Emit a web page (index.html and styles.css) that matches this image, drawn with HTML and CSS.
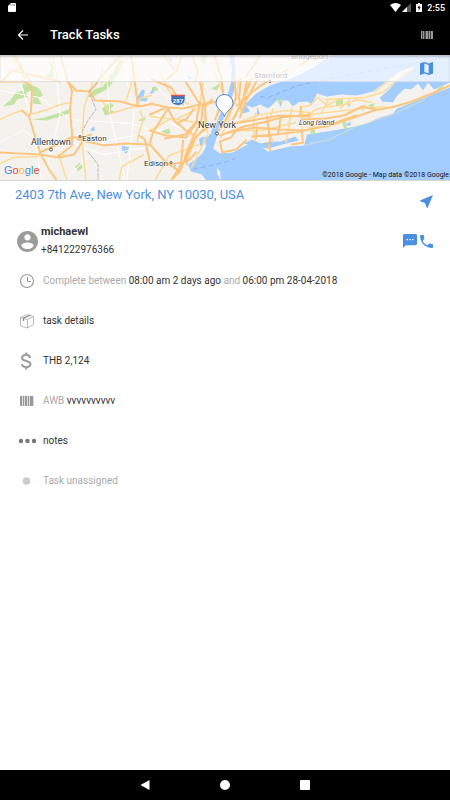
FILE: index.html
```
<!DOCTYPE html>
<html lang="en">

<head>
    <meta charset="UTF-8">
    <meta name="viewport" content="width=device-width, initial-scale=1.0">
    <title>Track Tasks</title>
    <link rel="stylesheet" href="styles.css">
</head>

<body>
<div class="status">
    <svg class="sd" width="8" height="9" viewBox="0 0 8 9"><path d="M3 0h4q1 0 1 1v7q0 1-1 1H1q-1 0-1-1V3z" fill="#fff"/><path d="M3 1v2M5 1v2M6.500 1v2" stroke="#777" stroke-width=".7"/></svg>
    <div class="status-right">
        <svg width="21" height="9" viewBox="0 0 21 9">
            <path d="M0 2Q5.500-2 11 2L5.500 9z" fill="#fff"/>
            <path d="M12 9l9-9v9z" fill="#555"/>
            <path d="M12 9l5-5v5z" fill="#fff"/>
        </svg>
        <svg width="6" height="9" viewBox="0 0 6 9"><path d="M0 1h2V0h2v1h2v8H0z" fill="#fff"/><path d="M3.500 2L1.500 5h1.200v2.500l2-3.300H3.500z" fill="#000"/></svg>
        <span>2:55</span>
    </div>
</div>
<header class="bar">
    <button type="button" class="icon-btn back" aria-label="Back">
        <svg width="12" height="12" viewBox="0 0 12 12"><path d="M11 6H1.500M6 1.500L1.500 6 6 10.500" fill="none" stroke="#fff" stroke-width="1.200"/></svg>
    </button>
    <h1>Track Tasks</h1>
    <button type="button" class="icon-btn" aria-label="Scan barcode">
        <svg width="12" height="8" viewBox="0 0 12 8"><path d="M0 0h12v8H0z" fill="#444"/><path d="M0 0h1v8H0zM2 0h1v8H2zM5 0h2v8H5zM8 0h1v8H8zM10 0h2v8h-2z" fill="#999"/></svg>
    </button>
</header>

<main>
    <section class="map">
        <svg class="map-canvas" viewBox="0 0 450 126" preserveAspectRatio="xMidYMid slice">
            <rect width="450" height="126" fill="#f5f2ee"/>
            <!-- parks -->
            <g fill="#c3e3a4">
                <path d="M3 52l8-7 5-7 8-2-2-6 9-1 3 6-8 3 2 4-11 3-3 5zM33 42l-2-12 8 4 4 7-5 3 4 6-9-1zM87 43l7-8 9-3 8-11 9-16 4 2-8 16-9 12-14 7zM31 65l14-2 24-8v4l-22 7zM102 54l8-6 4 3-4 4 6 3-11 3zM75 112l5-4 3 5-5 4zM138 66l8-4-2 5zM152 33l4-2 3 4-7 3zM161 77l8-3 2 4-7 4z"/>
                <path d="M46 23l5-8-2-10 5 8-1 11zM211 34l9-5-3 7zM199 6l4-6h5l-3 9z"/>
            </g>
            <!-- sound, ocean and bay -->
            <g fill="#a3ccff">
                <path d="M333 0L315 12 300 20 285 26 270 31 256 39 246 49 240 60 226 68 212 74 211 79 204 83 206 92 203 98 197 104 188 110 191 117 202 120 206 126H450V0z"/>
                <path d="M234 0h-5l3 14-1 14-4 14-5 13-5 12-7 14 1 7 7 2 3-8-2-7 5-12 7-16 5-19-1-17z"/>
                <path d="M137 43l5-8 3 1-2 8 5-1-2 4-8-1zM122 91l7 2-2 6-5-2zM91 74l3-2 1 4-4 1zM149 40l4-6 1 4zM168 2l5 4-3 2zM173 112l3-4-1 8zM187 20l6 4-4 1zM199 84l5-2-1 10-3-1z"/>
            </g>
            <!-- long island -->
            <path d="M217 82L219 72 236 63 241 52 243 59 250 57 246 51 253 53 260 50 268 54 277 46 288 46 293 52 298 48 307 47 312 50 317 39 327 42 342 40 357 41 373 37 385 28 400 17 415 12 408 19 396 27 387 37 380 43 382 47 393 48 397 41 405 34 411 35 418 29 423 36 428 28 434 35 443 31 450 28V33L437 38 423 44 397 54 393 59 377 64 367 69 350 73 327 77 307 80 304 91 290 92 268 97 262 93 248 90 240 94 233 98 220 99 213 94z" fill="#f5f2ee"/>
            <g fill="#a3ccff">
                <path d="M244 89l8-4 9 4 9-2 11 0 14-5 4 4-13 3-18 5-14-2zM257 52l3 7-3 2zM279 47l1 6 3-6zM345 71l5-4 1 4z"/>
            </g>
            <g fill="#c3e3a4">
                <path d="M278 46l3-2v4l-3 1zM336 45l7-1v7h-7zM346 49l4-2v6zM361 52l5-2-3 7zM368 51l7-3-2 6zM342 67h4l1 8-3-1zM310 76l5-1v5h-4zM437 34l7-4-1 4-5 3zM240 58l2-4 2 3z"/>
            </g>
            <path d="M217 113l3 4 1 9-4-7z" fill="#f5f2ee"/>
            <!-- minor streets -->
            <g fill="none" stroke="#fff" stroke-width="1">
                <path d="M0 36l40 7 30 22 60 4 40 12M0 87l24-11 22 17 20-7 36 14 52-8M105 0l5 60 15 66M45 120l15-60-5-60M140 17l30 28 25 20M155 60l24 13 30 8M125 17l9 40-7 69M20 26l10 35 12 65M64 126l40-39 60-12"/>
            </g>
            <!-- roads -->
            <g fill="none" stroke="#fcdb98" stroke-width="1.500" stroke-linejoin="round">
                <path d="M0 65q14-7 22-9M31 60q18-5 26-9l13-3M93 27l-9 26-2 35 4 38M101 44l9 15 25-7 6-9 11-2M134 8l-3 23-5 15M140 56l3 9-5 18-1 8M144 100l-22 12-3 14M0 109l13-6 26-1M58 99l9 27M101 29L128 4M12 0l13 25M53 0l5 28M150 62l26 3 24-12 26-10M160 17l9 20 20 13M150 76l21-12 31 5M203 27l-3 22 8 31-17 34M215 18l8 21-6 20M239 24l-3 21-15 38M249 24l-5 22-12 22"/>
                <path d="M240 67L262 60 285 56 310 58M240 76L262 76 296 68M256 58L253 72 255 87M273 54L268 72 273 88M292 53L286 88M300 53L310 51 318 43 327 51 340 44M305 62L318 54 345 50 357 45 372 48M329 44L322 58M350 45L340 54M309 60L345 56 385 52M325 45L365 43 383 38 402 21 413 14M307 74L325 69M374 38L396 20M302 57L302 78"/>
                <path d="M155 126l14-25 30-11"/>
            </g>
            <g fill="none" stroke="#fcc680" stroke-width="2" stroke-linejoin="round" stroke-linecap="round">
                <path d="M0 27h23q7 1 9 9l-1 21-2 5-7-6M29 62l6 20 6 18 8 15 8 11M0 98l40 2 19 3 15-3 8-12M40 98l17-8 14-7 12 0 8-3M68 27l4 9-2 19 2 24 0 12-14 11M68 27l8 9 14 1 5 9 26 1 17 5 12-2M90 37l14-18 17-19M78 85l26 6 21-2 25 1M131 0l7 52M139 81l6 4 5 23"/>
                <path d="M150 49l18 4 15 1 17-4 15-3M168 54l-15 24-3 10M168 54l6 12 12 10 7 4M150 76l16 5 20 2 10-14 4-22M200 28l5 23 1 20-16 20-10 26-9 9M186 106l10-24 13-10M180 117l-15-10-15-17M195 27l3-9-6-18M212 45l-7 7M214 0l7 22 3 23-9 20M234 22l2 21-9 20-8 13M252 24l-12 27-7 14M247 26l-5 24"/>
                <path d="M237 51L254 36 270 25 288 15M222 70L240 68 257 65 280 61 310 62M220 81L244 72 263 68 281 63 310 60M228 78L254 73 280 75 304 76 330 71 354 63 374 56 395 52M237 75L231 83 220 87 222 97M252 82L276 80 300 77 328 71 356 61M301 52L300 62M267 62L270 86M256 84L257 72M281 62L278 80M301 65L326 64 344 61 362 52 376 55M395 52L412 47 432 39 450 31M268 88L270 96M302 77L303 88 292 90M222 98L236 95 246 86"/>
                <path d="M183 50l-12-17-19-8M194 54l-7 10-10 5M169 110l18-3 9-9M203 51l-2 16-8 16-8 19 2 8M197 67l-12 13-20 4M171 126l10-16 2-24M150 60l14-6M186 28l14 22M241 24l-2 20 3 14M258 24l-12 22-6 17"/>
                <path d="M60 27L12 16 2 27M15 0l8 17 8 10M60 0l8 27M163 0l11 15M182 0l-5 16-10 9M246 22L261 0M316 0l-16 11"/>
            </g>
            <path d="M260 42l8 1 30-12 42-9 110-20M193 115l31-7 11-4" fill="none" stroke="#8ba8cc" stroke-width=".8" stroke-dasharray="5 3"/>
            <path d="M303 91l26-6 27-13 34-11 35-16" fill="none" stroke="#dce9c5" stroke-width=".8"/>
            <path d="M103 14l-6 15-8 8 7 18-8 11-6 11M88 97l10 13 0 16" fill="none" stroke="#bbb6b8" stroke-width="1" stroke-dasharray="4 1"/>
            <!-- places -->
            <g class="place">
                <text x="31" y="90" font-size="9">Allentown</text>
                <text x="82" y="86" font-size="8">Easton</text>
                <text x="144" y="111" font-size="8">Edison</text>
                <text x="198" y="73" font-size="9">New York</text>
                <text x="299" y="70" font-size="7" font-style="italic">Long Island</text>
                <text x="254" y="23" font-size="8">Stamford</text>
                <text x="291" y="4" font-size="8">Bridgeport</text>
            </g>
            <g fill="#fff" stroke="#555" stroke-width="1">
                <circle cx="51" cy="95" r="1.500"/>
                <circle cx="217" cy="79" r="1.500"/>
                <circle cx="171" cy="108" r="1"/>
                <circle cx="80" cy="82" r="1"/>
                <circle cx="270" cy="27" r="1"/>
            </g>
            <path d="M171 41h14v4q0 5-7 6-7-1-7-5z" fill="#3e72b8" stroke="#fff" stroke-width=".6"/>
            <path d="M171 41h14" stroke="#d95850" stroke-width="1.500"/>
            <text x="178" y="48" class="shield">287</text>
            <path d="M224.500 62c-2-6-8.500-8-8.500-13.500a8.500 8.500 0 0 1 17 0c0 5.500-6.500 7.500-8.500 13.500z" fill="#fff" stroke="#4a86c5"/>
        </svg>
        <div class="map-top">
            <button type="button" class="icon-btn" aria-label="Open map">
                <svg width="13" height="13" viewBox="3 3 18 18"><path d="M20.500 3l-.16.030L15 5.100 9 3 3.360 4.900c-.21.070-.36.250-.36.480V20.500c0 .28.220.5.500.5l.16-.030L9 18.900l6 2.100 5.640-1.900c.21-.070.36-.250.36-.480V3.500c0-.280-.220-.500-.500-.500zM15 19l-6-2.110V5l6 2.110V19z" fill="#4a8fe2"/></svg>
            </button>
        </div>
        <span class="google"><b>G</b><b>o</b><b>o</b><b>g</b><b>l</b><b>e</b></span>
        <span class="credit">©2018 Google - Map data ©2018 Google</span>
    </section>

    <section class="address">
        <h2>2403 7th Ave, New York, NY 10030, USA</h2>
        <button type="button" class="icon-btn navigate" aria-label="Navigate">
            <svg width="13" height="13" viewBox="3 3 18 18"><path d="M21 3L3 10.530v.98l6.840 2.650L12.480 21h.98L21 3z" fill="#4a8fe2"/></svg>
        </button>
    </section>

    <section class="contact">
        <svg width="21" height="21" viewBox="2 2 20 20"><path d="M12 2C6.480 2 2 6.480 2 12s4.480 10 10 10 10-4.480 10-10S17.520 2 12 2zm0 3c1.660 0 3 1.340 3 3s-1.340 3-3 3-3-1.340-3-3 1.340-3 3-3zm0 14.200c-2.500 0-4.710-1.280-6-3.220.03-1.990 4-3.080 6-3.080 1.990 0 5.970 1.090 6 3.080-1.290 1.940-3.500 3.220-6 3.220z" fill="#9b9b9b"/></svg>
        <div class="who">
            <strong>michaewl</strong>
            <span>+841222976366</span>
        </div>
        <button type="button" class="icon-btn" aria-label="Message">
            <svg width="14" height="14" viewBox="2 2 20 20"><path d="M20 2H4c-1.100 0-2 .9-2 2v18l4-4h14c1.100 0 2-.9 2-2V4c0-1.100-.9-2-2-2zM9 11H7V9h2v2zm4 0h-2V9h2v2zm4 0h-2V9h2v2z" fill="#4a8fe2"/></svg>
        </button>
        <button type="button" class="icon-btn" aria-label="Call">
            <svg width="13" height="13" viewBox="3 3 18 18"><path d="M6.620 10.790c1.440 2.830 3.760 5.140 6.590 6.590l2.200-2.200c.27-.27.67-.36 1.020-.24 1.120.37 2.330.57 3.570.57.55 0 1 .45 1 1V20c0 .55-.45 1-1 1-9.390 0-17-7.610-17-17 0-.55.45-1 1-1h3.500c.55 0 1 .45 1 1 0 1.250.2 2.450.57 3.570.11.35.03.74-.25 1.020l-2.200 2.200z" fill="#4a8fe2"/></svg>
        </button>
    </section>

    <ul class="details">
        <li>
            <svg width="18" height="16" viewBox="0 0 18 16"><g fill="none" stroke="#9b9b9b"><circle cx="9" cy="8" r="6.500" stroke-width="1.200"/><path d="M9.500 4v4.500H13"/></g></svg>
            <p><i>Complete between</i> 08:00 am 2 days ago <i>and</i> 06:00 pm 28-04-2018</p>
        </li>
        <li>
            <svg width="18" height="16" viewBox="0 0 18 16"><g fill="none" stroke="#aaa" stroke-width=".8"><path d="M2.500 4.500L9 1.500l6.500 2v8L9.500 15l-7-2zM2.500 4.500l7 2 6-3M9.500 6.500V15"/><path d="M5.500 8V5.200l6.500-3" stroke="#888" stroke-width="1.200"/></g></svg>
            <p>task details</p>
        </li>
        <li>
            <svg width="18" height="18" viewBox="0 0 18 18"><path d="M12 6c0-2-1.500-3-4-3S4 4.200 4 6c0 4 8.500 2 8.500 6 0 2-1.700 3-4.200 3S4 14 4 12M8.200.5V3M8.200 15v2.500" fill="none" stroke="#9b9b9b" stroke-width="2"/></svg>
            <p>THB 2,124</p>
        </li>
        <li>
            <svg width="18" height="10" viewBox="0 0 18 10"><path d="M2 0h14v10H2z" fill="#ddd"/><path d="M2 0h2v10H2zM5 0h1v10H5zM7 0h2v10H7zM10 0h1v10h-1zM12 0h3v10h-3z" fill="#999"/></svg>
            <p><i>AWB</i> vvvvvvvvvv</p>
        </li>
        <li>
            <svg width="18" height="6" viewBox="0 0 18 6"><g fill="#777"><circle cx="3" cy="3" r="2.200"/><circle cx="9.500" cy="3" r="2.200"/><circle cx="16" cy="3" r="2.200"/></g></svg>
            <p>notes</p>
        </li>
        <li>
            <svg width="18" height="8" viewBox="0 0 18 8"><circle cx="8.500" cy="4" r="3.800" fill="#ccc"/></svg>
            <p><i>Task unassigned</i></p>
        </li>
    </ul>
</main>

<nav class="keys">
    <button type="button" class="icon-btn" aria-label="Back key"><svg width="10" height="10" viewBox="0 0 10 10"><path d="M9.500 0v10L.5 5z" fill="#fff"/></svg></button>
    <button type="button" class="icon-btn" aria-label="Home"><svg width="10" height="10" viewBox="0 0 10 10"><circle cx="5" cy="5" r="5" fill="#fff"/></svg></button>
    <button type="button" class="icon-btn" aria-label="Recent apps"><svg width="10" height="10" viewBox="0 0 10 10"><rect width="10" height="10" rx="1" fill="#fff"/></svg></button>
</nav>
</body>

</html>
```
FILE: styles.css
```
* {
    box-sizing: border-box;
}

body {
    display: flex;
    flex-direction: column;
    min-height: 100vh;
    margin: 0;
    background: #fff;
    color: #333;
    font-family: Roboto, "Liberation Sans", sans-serif;
    font-size: 10px;
    line-height: 18px;
}

svg {
    display: block;
    flex: none;
}

h1, h2, p, ul {
    margin: 0;
    padding: 0;
}

.icon-btn {
    display: block;
    border: none;
    background: none;
    padding: 0;
    cursor: pointer;
}

.status {
    display: flex;
    justify-content: space-between;
    align-items: center;
    height: 15px;
    padding: 0 5px 0 8px;
    background: #000;
    color: #fff;
    font-size: 9px;
    font-weight: 500;
}

.status-right {
    display: flex;
    align-items: center;
    gap: 5px;
}

.bar {
    display: flex;
    align-items: center;
    height: 40px;
    padding: 0 17px;
    background: #000;
    color: #fff;
}

.bar h1 {
    flex: 1;
    padding-left: 21px;
    font-size: 13px;
    font-weight: 500;
}

main {
    flex: 1;
}

.map {
    position: relative;
    height: 126px;
    border-bottom: 1px solid #d8d6d2;
    overflow: hidden;
}

.map-canvas {
    width: 100%;
    height: 100%;
}

.map-top {
    position: absolute;
    top: 0;
    left: 0;
    right: 0;
    display: flex;
    justify-content: flex-end;
    align-items: center;
    height: 27px;
    padding: 0 17px;
    border-bottom: 1px solid #ccc8;
    background: #ffffffb3;
    box-shadow: inset 0 2px 2px #0003;
}

.place {
    fill: #333;
    stroke: #fff;
    stroke-width: 1px;
    paint-order: stroke;
}

.shield {
    fill: #fff;
    font-size: 6px;
    font-weight: 700;
    text-anchor: middle;
}

.google, .credit {
    position: absolute;
    bottom: 0;
}

.google {
    left: 4px;
    bottom: 1px;
    font-family: "Liberation Sans", sans-serif;
    font-size: 11px;
    text-shadow: 0 0 1px #fff;
}

.google b {
    color: #4285f4;
    font-weight: 400;
}

.google b:nth-child(2), .google b:nth-child(6) {
    color: #ea4335;
}

.google b:nth-child(3) {
    color: #fbbc05;
}

.google b:nth-child(5) {
    color: #34a853;
}

.credit {
    right: 1px;
    color: #111;
    font-size: 7px;
    line-height: 10px;
}

.address {
    display: flex;
    justify-content: space-between;
    align-items: flex-start;
    padding: 5px 17px 5px 15px;
}

.address h2 {
    color: #4a8fe2;
    font-size: 13px;
    font-weight: 400;
}

.navigate {
    padding-top: 9px;
}

.contact {
    display: flex;
    align-items: center;
    gap: 3px;
    padding: 10px 17px 2px;
}

.who {
    display: flex;
    flex: 1;
    flex-direction: column;
}

.who strong {
    font-size: 11px;
    font-weight: 700;
}

.details {
    list-style: none;
}

.details li {
    display: flex;
    align-items: center;
    gap: 7px;
    height: 40px;
    padding: 0 18px;
}

.details i {
    color: #aaa;
    font-style: normal;
}

.keys {
    display: flex;
    justify-content: center;
    align-items: center;
    gap: 70px;
    height: 30px;
    background: #000;
}
```
